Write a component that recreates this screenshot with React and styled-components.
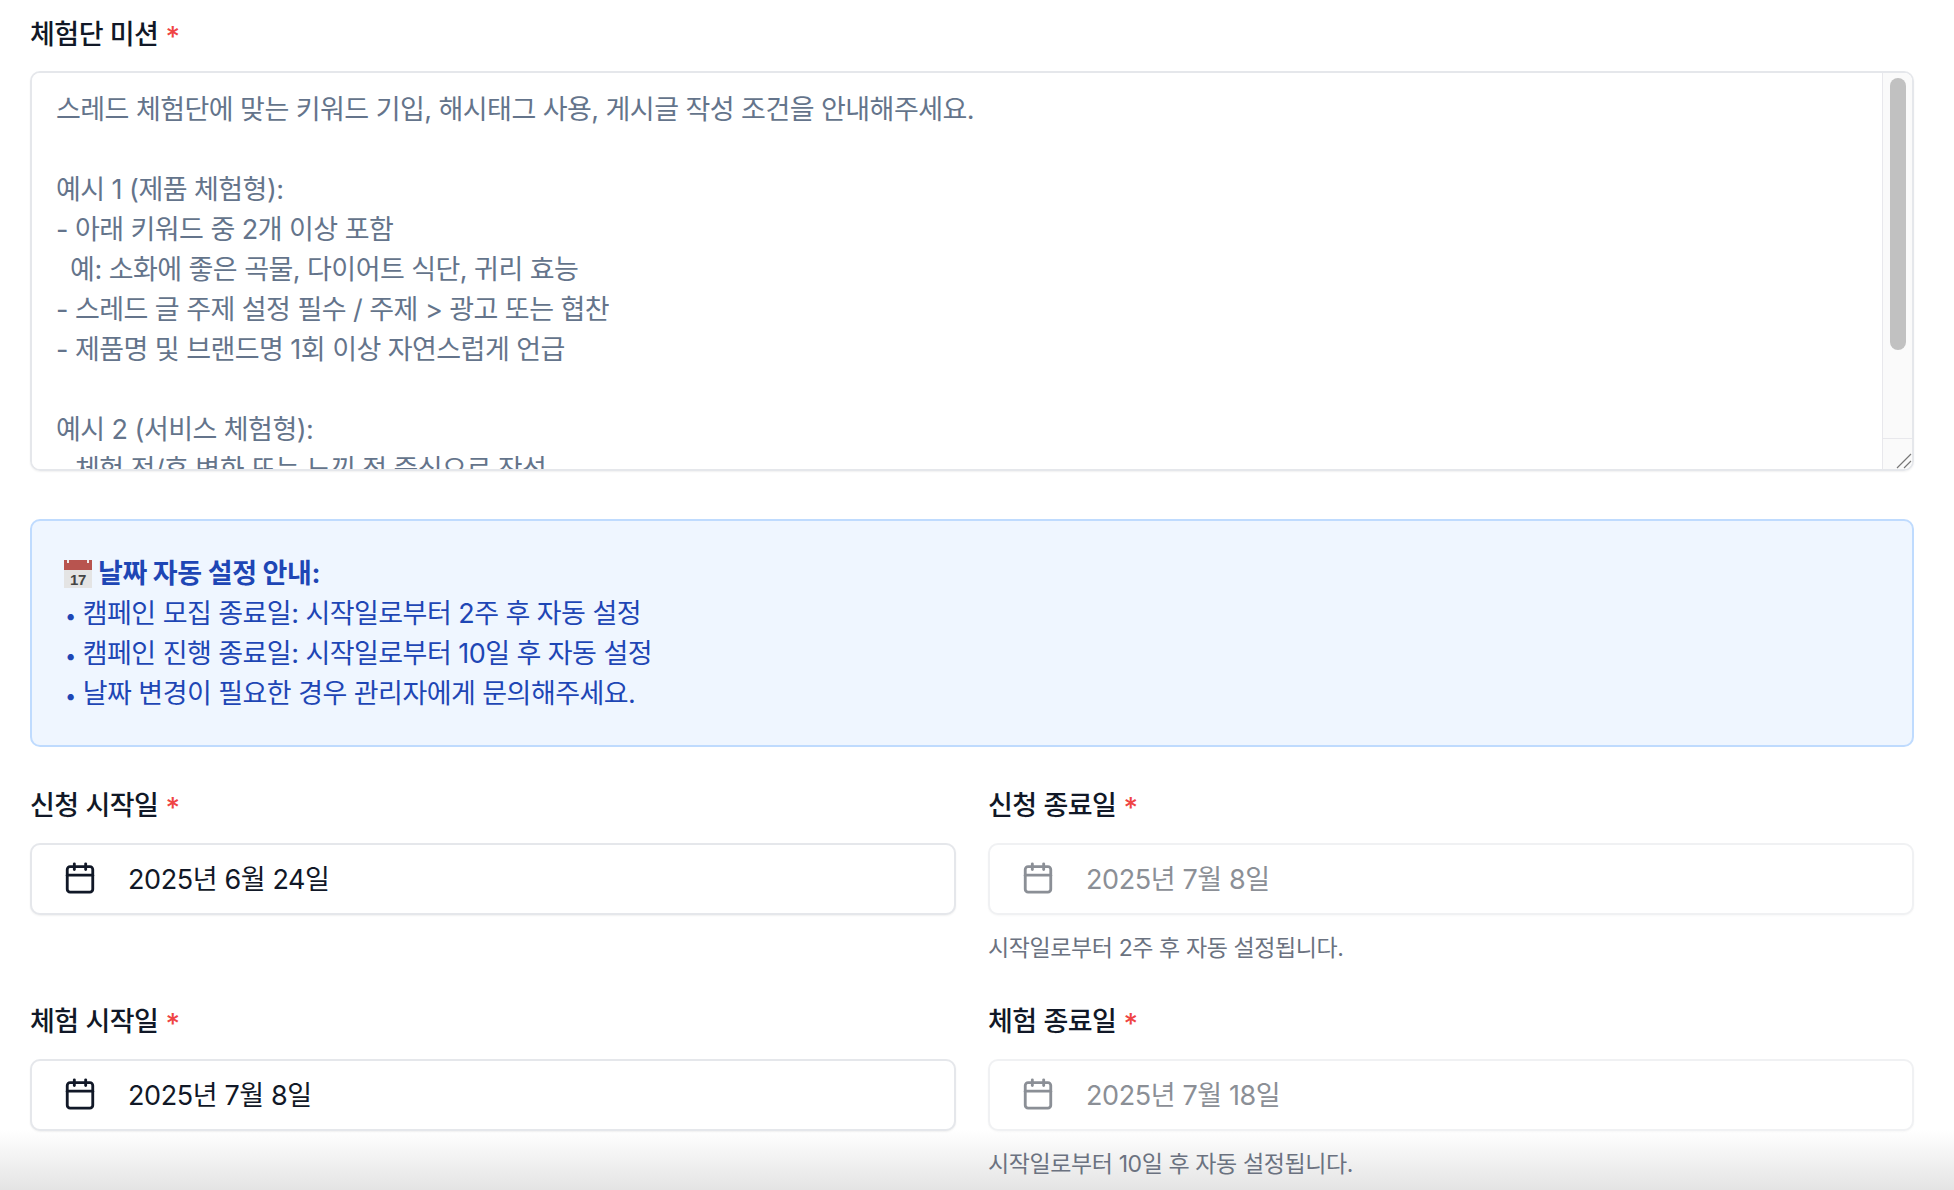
import { createGlobalStyle } from "styled-components";
import styled from "styled-components";
import { Calendar } from "lucide-react";

const GlobalStyle = createGlobalStyle`
  html, body {
    margin: 0;
    padding: 0;
    background: #ffffff;
    font-family: "Inter", "Noto Sans CJK KR", "Noto Sans", sans-serif;
  }
`;

const Page = styled.div`
  position: relative;
  box-sizing: border-box;
  width: 1954px;
  height: 1190px;
  overflow: hidden;
`;

const BottomFade = styled.div`
  position: absolute;
  left: 0;
  right: 0;
  bottom: 0;
  height: 60px;
  pointer-events: none;
  background: linear-gradient(to bottom, rgba(225, 225, 225, 0), rgba(225, 225, 225, 0.9));
`;

const Content = styled.div`
  position: relative;
  padding: 16px 40px 0 30px;
`;

const Label = styled.label`
  display: flex;
  align-items: center;
  gap: 7px;
  height: 32px;
  margin-bottom: 24px;
  font-size: 27px;
  font-weight: 500;
  letter-spacing: -0.5px;
  color: #111827;
`;

const Required = styled.span`
  padding-top: 9px;
  color: #ef4444;
  font-size: 28px;
`;

const MissionWrap = styled.div`
  position: relative;
  margin-top: -1px;
`;

const MissionArea = styled.textarea`
  display: block;
  box-sizing: border-box;
  width: 100%;
  height: 400px;
  margin: 0;
  padding: 17px 60px 0 24px;
  border: 2px solid #e5e7eb;
  border-radius: 10px;
  outline: none;
  background: #ffffff;
  box-shadow: 0 1px 2px rgba(0, 0, 0, 0.06);
  font-family: inherit;
  font-size: 27px;
  line-height: 40px;
  letter-spacing: -0.55px;
  color: #64748b;
  resize: none;
`;

const ScrollTrack = styled.div`
  position: absolute;
  top: 2px;
  right: 2px;
  bottom: 2px;
  display: flex;
  flex-direction: column;
  box-sizing: border-box;
  width: 30px;
  overflow: hidden;
  border-left: 1px solid #e8e8ec;
  border-radius: 0 8px 8px 0;
  background: #fafafa;
`;

const ScrollThumb = styled.div`
  width: 16px;
  height: 272px;
  margin: 5px 0 0 7px;
  border-radius: 8px;
  background: #c1c1c1;
`;

const ResizeCorner = styled.div`
  display: flex;
  justify-content: flex-end;
  align-items: flex-end;
  height: 30px;
  margin-top: auto;
  border-top: 1px solid #e8e8ec;
`;

const Notice = styled.div`
  box-sizing: border-box;
  height: 228px;
  margin: 48px 0 40px;
  padding: 33px 30px 0;
  border: 2px solid #bfdbfe;
  border-radius: 10px;
  background: #eff6ff;
  font-size: 27px;
  line-height: 40px;
  letter-spacing: -0.55px;
  color: #1e46b5;
`;

const NoticeTitle = styled.div`
  display: flex;
  align-items: center;
  gap: 6px;
  padding-left: 2px;
  font-weight: 700;
  letter-spacing: -0.4px;
`;

const NoticeLine = styled.div`
  height: 40px;
  padding-left: 3px;
`;

const Bullet = styled.span`
  font-size: 20px;
  line-height: 1;
`;

const FormGrid = styled.div`
  display: grid;
  grid-template-columns: 1fr 1fr;
  column-gap: 32px;
`;

const Field = styled.div`
  height: 216px;
`;

const DateBox = styled.div`
  display: flex;
  align-items: center;
  gap: 31px;
  box-sizing: border-box;
  height: 72px;
  padding: 0 0 3px 31px;
  border: 2px solid ${(props) => (props.$locked ? "#f0f1f3" : "#e5e7eb")};
  border-radius: 10px;
  background: #ffffff;
  box-shadow: 0 1px 2px rgba(0, 0, 0, ${(props) => (props.$locked ? 0.03 : 0.06)});
  font-size: 27px;
  letter-spacing: -0.4px;
  color: ${(props) => (props.$locked ? "#8b8f96" : "#111827")};
`;

const Help = styled.div`
  margin-top: 17px;
  font-size: 23px;
  line-height: 32px;
  letter-spacing: -0.4px;
  color: #6b7280;
`;

function CalendarEmoji() {
  return (
    <svg width="28" height="28" viewBox="0 0 28 28">
      <rect width="28" height="28" fill="#e4e4e4" />
      <rect width="28" height="10" fill="#b8544f" />
      <rect x="3" y="0" width="2" height="3" fill="#eee" />
      <rect x="23" y="0" width="2" height="3" fill="#eee" />
      <text x="14" y="25" textAnchor="middle" fontSize="15" fill="#444" fontFamily="Liberation Sans">
        17
      </text>
    </svg>
  );
}

function ResizeGrip() {
  return (
    <svg width="18" height="18" viewBox="0 0 18 18">
      <path d="M3 17 L17 3 M10 17 L17 10" stroke="#777" strokeWidth="1.2" fill="none" />
    </svg>
  );
}

const missionText = `스레드 체험단에 맞는 키워드 기입, 해시태그 사용, 게시글 작성 조건을 안내해주세요.

예시 1 (제품 체험형):
- 아래 키워드 중 2개 이상 포함
  예: 소화에 좋은 곡물, 다이어트 식단, 귀리 효능
- 스레드 글 주제 설정 필수 / 주제 > 광고 또는 협찬
- 제품명 및 브랜드명 1회 이상 자연스럽게 언급

예시 2 (서비스 체험형):
- 체험 전/후 변화 또는 느낀 점 중심으로 작성`;

const noticeLines = [
  "캠페인 모집 종료일: 시작일로부터 2주 후 자동 설정",
  "캠페인 진행 종료일: 시작일로부터 10일 후 자동 설정",
  "날짜 변경이 필요한 경우 관리자에게 문의해주세요.",
];

const dateFields = [
  { label: "신청 시작일", value: "2025년 6월 24일" },
  { label: "신청 종료일", value: "2025년 7월 8일", help: "시작일로부터 2주 후 자동 설정됩니다." },
  { label: "체험 시작일", value: "2025년 7월 8일" },
  { label: "체험 종료일", value: "2025년 7월 18일", help: "시작일로부터 10일 후 자동 설정됩니다." },
];

export default function App() {
  return (
    <Page>
      <GlobalStyle />
      <BottomFade />
      <Content>
        <Label>
          체험단 미션 <Required>*</Required>
        </Label>
        <MissionWrap>
          <MissionArea readOnly defaultValue={missionText} />
          <ScrollTrack>
            <ScrollThumb />
            <ResizeCorner>
              <ResizeGrip />
            </ResizeCorner>
          </ScrollTrack>
        </MissionWrap>
        <Notice>
          <NoticeTitle>
            <CalendarEmoji />
            날짜 자동 설정 안내:
          </NoticeTitle>
          {noticeLines.map((line) => (
            <NoticeLine key={line}>
              <Bullet>•</Bullet> {line}
            </NoticeLine>
          ))}
        </Notice>
        <FormGrid>
          {dateFields.map((field) => (
            <Field key={field.label}>
              <Label>
                {field.label} <Required>*</Required>
              </Label>
              <DateBox $locked={!!field.help}>
                <Calendar size={34} strokeWidth={2} color={field.help ? "#8b8f96" : "#111827"} />
                {field.value}
              </DateBox>
              {field.help && <Help>{field.help}</Help>}
            </Field>
          ))}
        </FormGrid>
      </Content>
    </Page>
  );
}
